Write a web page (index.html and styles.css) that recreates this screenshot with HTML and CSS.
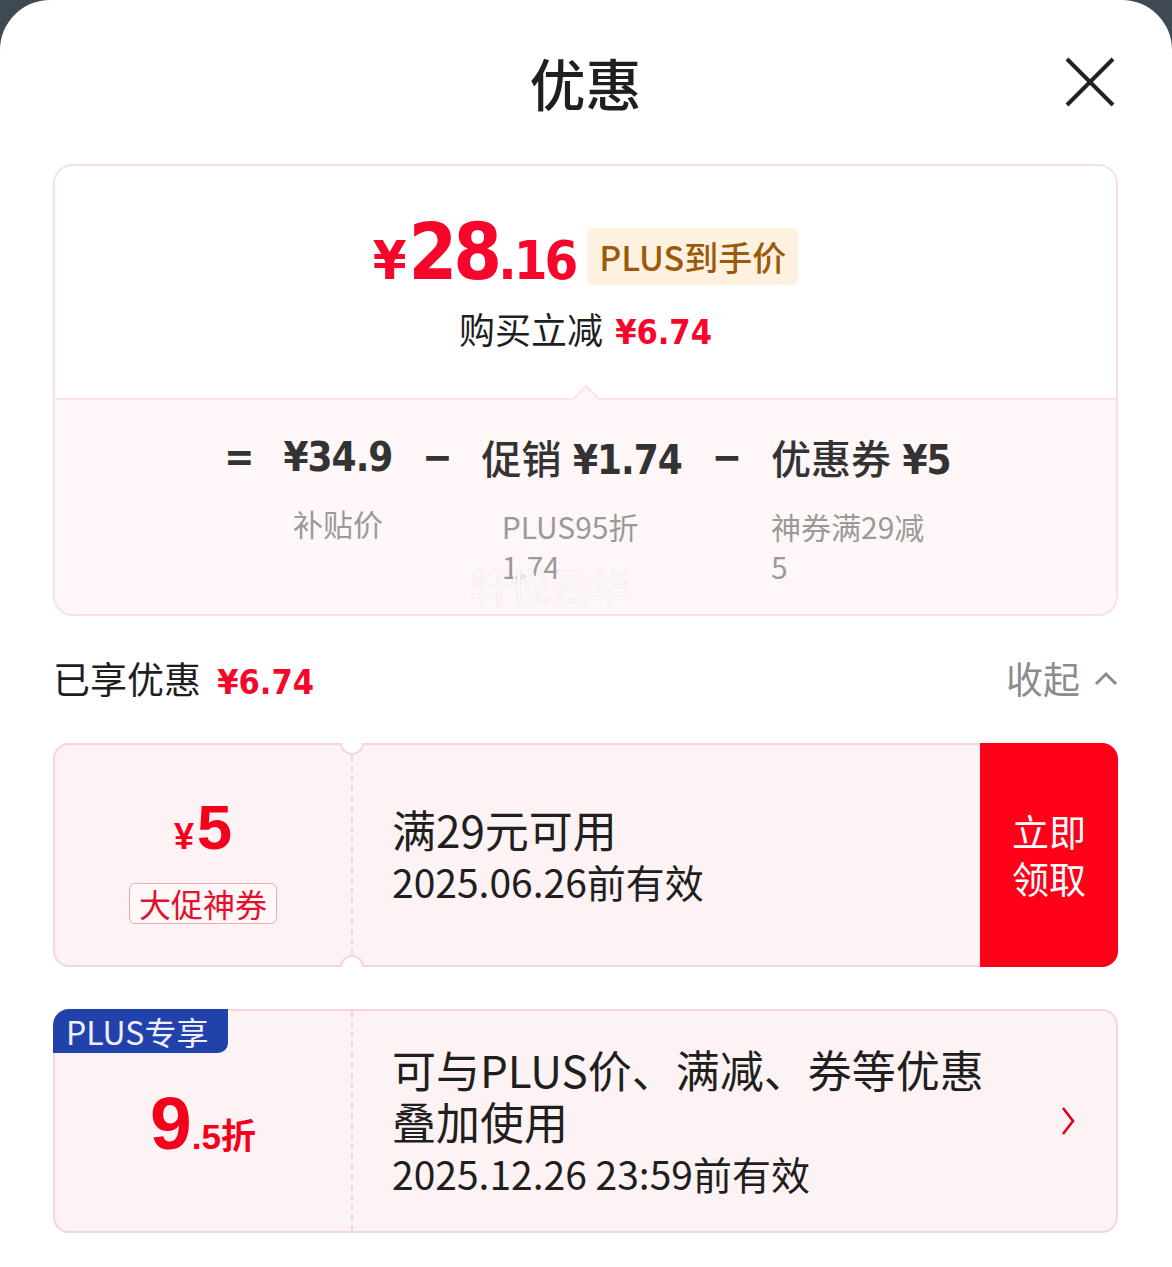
FILE: index.html
```html
<!DOCTYPE html>
<html lang="zh-CN">
<head>
	<meta charset="utf-8">
	<title>优惠</title>
	<link rel="stylesheet" href="styles.css">
</head>
<body>
	<div class="sheet">
		<header class="head">
			<span></span>
			<h1 class="title">优惠</h1>
			<button class="close" aria-label="关闭">
				<svg width="52" height="52" viewBox="0 0 52 52"><path d="M3 3 L49 49 M49 3 L3 49" stroke="#222" stroke-width="4" fill="none"/></svg>
			</button>
		</header>

		<section class="summary">
			<div class="summary-top">
				<div class="final">
					<span class="final-price"><span class="yen">¥</span>28<span class="dec">.16</span></span>
					<span class="plus-tag">PLUS到手价</span>
				</div>
				<div class="saved">购买立减 <span class="num">¥6.74</span></div>
			</div>
			<div class="summary-bottom">
				<span class="notch"></span>
				<div class="formula">
					<span class="op">=</span>
					<div class="term">
						<div class="term-val">¥34.9</div>
						<div class="term-note">补贴价</div>
					</div>
					<span class="op">−</span>
					<div class="term">
						<div class="term-val"><span class="cn">促销</span> ¥1.74</div>
						<div class="term-note">PLUS95折1.74</div>
					</div>
					<span class="op">−</span>
					<div class="term left">
						<div class="term-val"><span class="cn">优惠券</span> ¥5</div>
						<div class="term-note">神券满29减5</div>
					</div>
				</div>
				<span class="watermark">轩悦云华</span>
			</div>
		</section>

		<div class="enjoyed">
			<div class="enjoyed-left">已享优惠 <span class="num">¥6.74</span></div>
			<div class="fold">收起
				<svg width="24" height="16" viewBox="0 0 24 16"><path d="M2 14 L12 4 L22 14" stroke="#8c8c8c" stroke-width="3" fill="none"/></svg>
			</div>
		</div>

		<div class="coupon">
			<div class="coupon-left notched">
				<div class="amount"><span class="yen">¥</span><span class="big">5</span></div>
				<div class="tag">大促神券</div>
			</div>
			<div class="coupon-body">
				<div class="c-title">满29元可用</div>
				<div class="c-date">2025.06.26前有效</div>
			</div>
			<div class="coupon-btn">立即<br>领取</div>
		</div>

		<div class="coupon plus">
			<span class="plus-badge">PLUS专享</span>
			<div class="coupon-left centered">
				<div class="discount"><span class="big">9</span><span class="small">.5<span class="cn">折</span></span></div>
			</div>
			<div class="coupon-body">
				<div class="c-title wrap">可与PLUS价、满减、券等优惠叠加使用</div>
				<div class="c-date">2025.12.26 23:59前有效</div>
			</div>
			<div class="coupon-arrow">
				<svg width="16" height="30" viewBox="0 0 16 30"><path d="M3 2 L13 15 L3 28" stroke="#e0001b" stroke-width="2.6" fill="none"/></svg>
			</div>
		</div>
	</div>
</body>
</html>
```

FILE: styles.css
```css
body {
	margin: 0;
	background: #3f4953;
	font-family: "Noto Sans CJK SC", "Noto Sans", sans-serif;
	color: #1f1f1f;
}
.sheet {
	background: #fff;
	border-radius: 50px 50px 0 0;
	min-height: 1267px;
	padding: 0 54px 40px 53px;
	box-sizing: border-box;
}
.head {
	height: 164px;
	display: grid;
	grid-template-columns: 1fr auto 1fr;
	align-items: center;
}
.title {
	margin: 0;
	font-size: 56px;
	font-weight: 500;
	line-height: 1;
	color: #1f1f1f;
}
.close {
	justify-self: end;
	margin-right: 2px;
	width: 52px;
	height: 52px;
	padding: 0;
	border: none;
	background: none;
}

/* summary card */
.summary {
	border: 2px solid #fbdfe5;
	border-radius: 20px;
	overflow: hidden;
}
.summary-top {
	height: 232px;
	box-sizing: border-box;
	padding-top: 58px;
	display: flex;
	flex-direction: column;
	align-items: center;
	background: #fff;
}
.final {
	display: flex;
	align-items: center;
	gap: 12px;
	height: 64px;
}
.final-price,
.num,
.op,
.term-val {
	font-family: "DejaVu Sans Condensed", "DejaVu Sans", "Noto Sans CJK SC", sans-serif;
	font-stretch: condensed;
	font-weight: bold;
}
.final-price {
	color: #f5062a;
	font-size: 78px;
	line-height: 64px;
	letter-spacing: -4px;
}
.final-price .yen {
	font-size: 54px;
	margin-right: 6px;
}
.final-price .dec {
	font-size: 54px;
	letter-spacing: -3px;
}
.plus-tag {
	background: #fff1df;
	color: #9b5a0a;
	font-size: 34px;
	font-weight: 500;
	height: 57px;
	line-height: 57px;
	padding: 0 12px;
	border-radius: 6px;
}
.saved {
	margin-top: 18px;
	font-size: 36px;
	line-height: 44px;
}
.num {
	color: #f5062a;
	font-size: 34px;
	margin-left: 4px;
}
.summary-bottom {
	position: relative;
	height: 216px;
	box-sizing: border-box;
	padding-top: 32px;
	background: #fff6f7;
	border-top: 2px solid #fbe3e8;
}
.notch {
	position: absolute;
	top: -11px;
	left: 50%;
	width: 18px;
	height: 18px;
	margin-left: -10px;
	background: #fff6f7;
	border-top: 2px solid #fbe3e8;
	border-left: 2px solid #fbe3e8;
	transform: rotate(45deg);
}
.formula {
	display: flex;
	justify-content: center;
	align-items: flex-start;
	gap: 30px;
	padding-left: 4px;
}
.op,
.term-val {
	font-size: 40px;
	line-height: 50px;
	color: #333;
	letter-spacing: -1px;
}
.term-val .cn {
	font-family: "Noto Sans CJK SC", sans-serif;
	font-weight: 500;
	font-stretch: normal;
	letter-spacing: 0;
}
.term {
	display: flex;
	flex-direction: column;
	align-items: center;
}
.term.left {
	align-items: flex-start;
}
.term-note {
	margin-top: 21px;
	max-width: 160px;
	font-size: 30px;
	line-height: 40px;
	color: #9a9a9a;
	text-align: left;
}
.watermark {
	position: absolute;
	left: 415px;
	top: 160px;
	font-size: 40px;
	line-height: 50px;
	color: #fbf7f8;
	text-shadow: 0 0 1px #d8ced1;
}

/* enjoyed row */
.enjoyed {
	display: flex;
	justify-content: space-between;
	align-items: center;
	height: 48px;
	margin-top: 38px;
	font-size: 37px;
}
.enjoyed .num {
	margin-left: 8px;
}
.fold {
	display: flex;
	align-items: center;
	color: #8c8c8c;
}
.fold svg {
	margin-left: 14px;
}

/* coupons */
.coupon {
	position: relative;
	display: flex;
	height: 224px;
	box-sizing: border-box;
	margin-top: 41px;
	border: 2px solid #f6d6dc;
	border-radius: 16px;
	background: #fdf3f4;
}
.coupon.plus {
	margin-top: 42px;
}
.coupon-left {
	position: relative;
	flex: 0 0 298px;
	box-sizing: border-box;
	border-right: 2px dashed #f3d3d8;
	display: flex;
	flex-direction: column;
	align-items: center;
	padding-top: 50px;
}
.coupon-left.centered {
	padding-top: 4px;
	justify-content: center;
}
.notched::before,
.notched::after {
	content: "";
	position: absolute;
	left: 285px;
	width: 20px;
	height: 10px;
	background: #fff;
	border: 2px solid #f6d6dc;
}
.notched::before {
	top: -2px;
	border-top: none;
	border-radius: 0 0 12px 12px;
}
.notched::after {
	bottom: -2px;
	border-bottom: none;
	border-radius: 12px 12px 0 0;
}
.amount {
	color: #f5001c;
	font-family: "Liberation Sans", Arial, sans-serif;
	font-weight: bold;
	line-height: 64px;
	height: 64px;
}
.amount .yen {
	font-size: 36px;
	margin-right: 3px;
}
.amount .big {
	font-size: 63px;
}
.tag {
	margin-top: 24px;
	padding: 0 9px;
	border: 1px solid #f2a9b3;
	border-radius: 6px;
	background: #fff7f8;
	color: #e5112c;
	font-size: 32px;
	line-height: 39px;
}
.coupon-body {
	flex: 1;
	display: flex;
	flex-direction: column;
	justify-content: center;
	padding-left: 39px;
}
.c-title {
	font-size: 44px;
	line-height: 52px;
}
.c-title.wrap {
	max-width: 615px;
}
.c-date {
	font-size: 39px;
	line-height: 52px;
}
.coupon-btn {
	flex: 0 0 138px;
	margin: -2px -2px -2px 0;
	display: flex;
	align-items: center;
	justify-content: center;
	text-align: center;
	background: #ff0019;
	border-radius: 0 16px 16px 0;
	color: #fff;
	font-size: 37px;
	line-height: 47px;
}
.plus-badge {
	position: absolute;
	top: -2px;
	left: -2px;
	height: 44px;
	width: 175px;
	box-sizing: border-box;
	padding-left: 13px;
	background: #2142aa;
	color: #eef0ff;
	font-size: 32px;
	line-height: 44px;
	border-radius: 16px 0 10px 0;
}
.discount {
	color: #f5001c;
	font-family: "Liberation Sans", Arial, sans-serif;
	font-weight: bold;
}
.discount .big {
	font-size: 75px;
}
.discount .small {
	font-size: 35px;
}
.discount .cn {
	font-family: "Noto Sans CJK SC", sans-serif;
}
.coupon-arrow {
	display: flex;
	align-items: center;
	padding-right: 40px;
}
```
